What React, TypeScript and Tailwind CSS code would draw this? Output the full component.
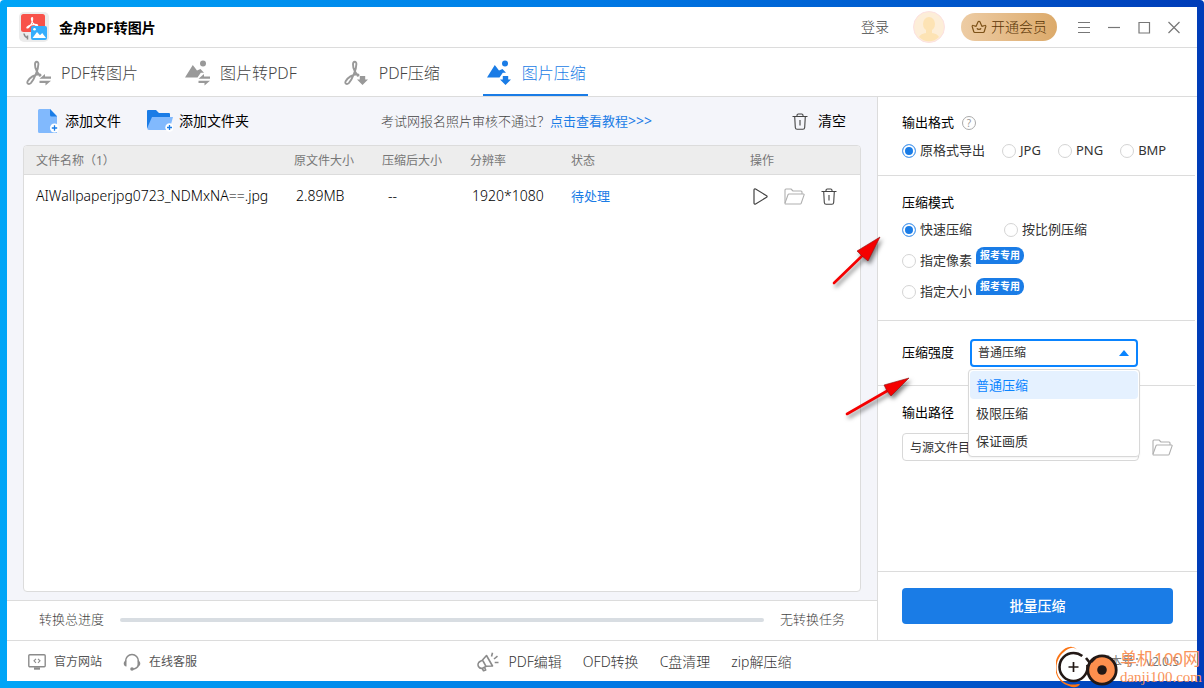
import { ReactNode, useState } from "react";

const tabs = [
  { label: "PDF转图片", icon: "pdf-swap" },
  { label: "图片转PDF", icon: "image-swap" },
  { label: "PDF压缩", icon: "pdf-down" },
  { label: "图片压缩", icon: "image-down" },
];

const formats = ["原格式导出", "JPG", "PNG", "BMP"];
const strengths = ["普通压缩", "极限压缩", "保证画质"];
const tools = ["PDF编辑", "OFD转换", "C盘清理", "zip解压缩"];

const windowButtons = [
  { label: "菜单", path: "M1 2.500h12M1 7.500h12M1 12.500h12" },
  { label: "最小化", path: "M1 7.500h12" },
  { label: "最大化", path: "M2 2.500h10.500v10.500H2z" },
  { label: "关闭", path: "M1.500 2 12.500 13M12.500 2 1.500 13" },
];

function TabIcon({ kind }: { kind: string }) {
  const isPdf = kind.startsWith("pdf");
  const isSwap = kind.endsWith("swap");
  return (
    <svg viewBox="0 0 25 26" className="h-[26px] w-[25px] shrink-0" aria-hidden="true">
      {isPdf ? (
        <path
          d="M14 15.200C11.500 13.500 8.900 8.500 9 4.200c.1-3.200 3.400-3.400 3.400-.2 0 5-4 15-7.400 18.800-2.200 2.300-4.800.8-3.200-1.800 2-3.400 6.700-6.600 11.200-6.800 2 0 2 1.500.6 1.500"
          fill="none"
          stroke="currentColor"
          strokeWidth="1.900"
          strokeLinecap="round"
        />
      ) : (
        <g fill="currentColor">
          <circle cx="18" cy="3.500" r="3" />
          <path d="M0 17.500 7.800 5l4.200 5.500 3.500-1.500 3.500 3.800h-3.200l-3.300 4.700z" />
        </g>
      )}
      {isSwap ? (
        <path d="M13.500 18.800 19 14v2.400h6v2.400zM25 20.800 19.500 25.500v-2.400h-6v-2.300z" fill="currentColor" />
      ) : (
        <path d="M15.800 16h5.400v3.600H24l-5.500 5.400-5.500-5.400h2.800z" fill="currentColor" />
      )}
    </svg>
  );
}

function AppLogo() {
  return (
    <svg viewBox="0 0 30 30" className="h-[30px] w-[30px] shrink-0" aria-hidden="true">
      <rect width="30" height="30" rx="5" fill="#ececec" />
      <path d="M4.500 2h19A2.500 2.500 0 0 1 26 4.500V16H2V4.500A2.500 2.500 0 0 1 4.500 2z" fill="#f8524a" />
      <path d="M2 16h12v4H4.500A2.500 2.500 0 0 1 2 17.500z" fill="#f8524a" />
      <path
        d="M13.200 5.500c-1.200 0-.9 2.600.1 4.500 1 2 3.800 4.200 5.200 3.600 1-.7-1.800-1.700-4.800-1-3 .6-6.200 2-5.900 3.100.6 1.200 3.500-1.700 4.700-4.200 1.100-2.400 1.600-6 .7-6z"
        fill="none"
        stroke="#fff"
        strokeWidth="1.100"
      />
      <rect x="12" y="14" width="16" height="14" rx="2" fill="#35aefc" />
      <path d="m13.500 26 4.500-6 3 3.300 2.200-2.300 3.800 5z" fill="#fff" />
      <circle cx="15.500" cy="17.300" r="1.300" fill="#fff" />
      <path d="M5 21.500c.3 2 1.500 3.700 3.500 4.300M8.500 23.500v4" fill="none" stroke="#8a8a8a" strokeWidth="1.500" />
    </svg>
  );
}

function AvatarIcon() {
  return (
    <svg viewBox="0 0 32 32" className="h-8 w-8 shrink-0" aria-hidden="true">
      <circle cx="16" cy="16" r="15.500" fill="#fdeed8" stroke="#fce0e0" />
      <ellipse cx="16" cy="13" rx="6" ry="7" fill="#fde3b4" />
      <path d="M13 18h6v4c3 .6 6 1.500 7 4a14 14 0 0 1-20 0c1-2.500 4-3.400 7-4z" fill="#fde3b4" />
    </svg>
  );
}

function CrownIcon() {
  return (
    <svg viewBox="0 0 16 14" className="h-[14px] w-4" fill="none" stroke="#7d5218" strokeWidth="1.200" strokeLinejoin="round" aria-hidden="true">
      <path d="M3.800 12.500c-.5 0-.9-.3-1-.8L1.200 6.500c-.2-.8.4-1.300 1-1l2.900.8 2-4.500c.3-.7 1.500-.7 1.800 0l2 4.500 2.900-.8c.6-.3 1.200.2 1 1l-1.600 5.200c-.1.500-.5.800-1 .8z" />
      <path d="M6 8.200c.5 1.600 3.500 1.600 4 0" />
    </svg>
  );
}

function AddFileIcon() {
  return (
    <svg viewBox="0 0 21 25" className="h-[25px] w-[21px]" aria-hidden="true">
      <path d="M1.500 0H12l7 7v17H1.500A1.500 1.500 0 0 1 0 22.500v-21A1.500 1.500 0 0 1 1.500 0z" fill="#81b9fd" />
      <path d="m12 0 7 7.500h-5.500A1.500 1.500 0 0 1 12 6z" fill="#1a7ce6" />
      <circle cx="16.500" cy="19" r="4.500" fill="#fff" />
      <path d="M16.500 16.300v5.400M13.800 19h5.400" stroke="#1a7ce6" strokeWidth="1.300" />
    </svg>
  );
}

function AddFolderIcon() {
  return (
    <svg viewBox="0 0 26 22" className="h-[22px] w-[26px]" aria-hidden="true">
      <path d="M0 1a1 1 0 0 1 1-1h8l3 3h10a1 1 0 0 1 1 1v14H0z" fill="#1a7ce6" />
      <path d="M5 7h21l-3.500 13H2a2 2 0 0 1-1.800-2z" fill="#81b9fd" />
      <circle cx="22.500" cy="17.500" r="4.200" fill="#fff" />
      <path d="M22.500 15v5M20 17.500h5" stroke="#1a7ce6" strokeWidth="1.300" />
    </svg>
  );
}

function TrashIcon() {
  return (
    <svg viewBox="0 0 16 17" className="h-[17px] w-4" fill="none" stroke="#444" strokeWidth="1.100" aria-hidden="true">
      <path d="M.5 3.500h15M5 3.500V2.300C5 1.500 5.600 1 6.300 1h3.400c.7 0 1.300.5 1.300 1.300v1.200M2.700 3.500l.6 11c.1 1 .7 1.800 1.800 1.800h5.800c1.100 0 1.700-.8 1.800-1.800l.6-11M8 7v5.500" />
    </svg>
  );
}

function FolderIcon() {
  return (
    <svg viewBox="0 0 21 17" className="h-[17px] w-[21px]" fill="none" stroke="#b0b0b0" strokeWidth="1.100" strokeLinejoin="round" aria-hidden="true">
      <path d="M1 15V2c0-.6.400-1 1-1h5l2 2h8c.6 0 1 .4 1 1v2" />
      <path d="M5 6h14.500c.5 0 .8.400.6.900l-2.900 8.400c-.2.500-.5.700-1 .7H1.600c-.5 0-.7-.4-.6-.9L4 6.700c.2-.5.500-.7 1-.7z" />
    </svg>
  );
}

function PlayIcon() {
  return (
    <svg viewBox="0 0 15 17" className="h-[17px] w-[15px]" fill="none" stroke="#444" strokeWidth="1.200" strokeLinejoin="round" aria-hidden="true">
      <path d="M1 2v13c0 1 .8 1.400 1.600.9l11-6.600c.7-.4.7-1.200 0-1.600l-11-6.600C1.800.6 1 1 1 2z" />
    </svg>
  );
}

function MonitorIcon() {
  return (
    <svg viewBox="0 0 18 16" className="h-4 w-[18px]" fill="none" stroke="#8b8b8b" strokeWidth="1.400" aria-hidden="true">
      <rect x=".8" y=".8" width="16.400" height="12" rx="1" />
      <path d="M8 4.800 6 6.800l2 2M10 4.800l2 2-2 2" strokeWidth="1.100" />
      <path d="M6 14.500h6" strokeWidth="2.400" />
    </svg>
  );
}

function HeadsetIcon() {
  return (
    <svg viewBox="0 0 18 18" className="h-[18px] w-[18px]" fill="none" stroke="#8b8b8b" strokeWidth="1.500" aria-hidden="true">
      <path d="M2.500 8.500a6.500 7 0 0 1 13 0M15.500 12c-.8 2.500-3 4-6 4.200" />
      <path d="M3.500 7.500v6C1.500 13.300.7 12 .7 10.500s1-2.800 2.800-3zM14.500 7.500v6c2-.2 2.800-1.500 2.800-3s-1-2.800-2.800-3z" fill="#8b8b8b" stroke="none" />
      <circle cx="9" cy="16" r="1.800" fill="#8b8b8b" stroke="none" />
    </svg>
  );
}

function MegaphoneIcon() {
  return (
    <svg viewBox="0 0 22 20" className="h-5 w-[22px]" fill="none" stroke="#8b8b8b" strokeWidth="1.600" strokeLinejoin="round" aria-hidden="true">
      <path d="M1.500 14.500c-1-1.800-.3-4 1.500-5l2.500-1.400L9.500 3.500l6 10.500-6.300.3-2.700 1.400c-1.800 1-4 .5-5-1.200zM5.500 8l3.500 6.300M5.200 16.300l1.300 2.500 2.200-.8-1.200-2.700" />
      <path d="M14.500 4.500 15.500.8M17 7l3.500-2.800M17.700 10.500h3.800" />
    </svg>
  );
}

interface RadioProps {
  name: string;
  label: string;
  checked: boolean;
  onSelect: () => void;
}

function Radio({ name, label, checked, onSelect }: RadioProps) {
  return (
    <label className="flex h-5 items-center gap-1 whitespace-nowrap">
      <input
        type="radio"
        name={name}
        checked={checked}
        onChange={onSelect}
        className="h-3.5 w-3.5 appearance-none rounded-full border border-[#d4d4d4] bg-white checked:border-[#5ba2f0] checked:bg-[#1a7ce6] checked:shadow-[inset_0_0_0_2px_white]"
      />
      {label}
    </label>
  );
}

function ExamBadge() {
  return (
    <span className="mb-3 ml-1 flex h-[17px] w-12 items-center justify-center rounded-t-lg rounded-br-lg bg-[#1a7ce6] text-[10px] font-bold text-white">
      报考专用
    </span>
  );
}

function IconButton({ label, children }: { label: string; children: ReactNode }) {
  return (
    <button type="button" aria-label={label} title={label}>
      {children}
    </button>
  );
}

function Watermark() {
  return (
    <div className="pointer-events-none absolute right-0.5 bottom-0 flex items-center gap-0.5 text-[#f9935a]">
      <svg viewBox="0 0 62 42" className="h-[42px] w-[62px]" fill="none" aria-hidden="true">
        <path d="M21 3.500C16-.5 11 3 8 6-2 14-2 30 8 36c5 3 9 3 14 2l2 0c-2 4-7 4-11 2C-2 36-5 16 5 6c4-4 10-8 16-2.500z" fill="#fb7414" />
        <circle cx="17.500" cy="21" r="14" fill="#fff" stroke="#231815" strokeWidth="2.600" strokeDasharray="78 10" strokeDashoffset="3" />
        <path d="M17.500 16v10M12.500 21h10" stroke="#231815" strokeWidth="1.700" />
        <circle cx="46" cy="24" r="14.200" fill="#fd8f4e" stroke="#231815" strokeWidth="2.800" />
        <circle cx="46" cy="24" r="4.800" fill="#231815" />
        <path d="m30 12 4 5M39 12l-4 4" stroke="#231815" strokeWidth="2.600" />
      </svg>
      <div className="flex flex-col">
        <span className="text-[17px] leading-5">单机100网</span>
        <span className="font-['Liberation_Serif',serif] text-[15px] leading-4">danji100.com</span>
      </div>
    </div>
  );
}

function Arrow({ points, line, className }: { points: string; line: string; className: string }) {
  return (
    <svg viewBox="0 0 72 56" className={className} aria-hidden="true">
      <g stroke="#8c1010" strokeWidth=".6">
        <path d={line} stroke="#f50000" strokeWidth="2.600" strokeLinecap="round" />
        <polygon points={points} fill="#f50000" />
      </g>
    </svg>
  );
}

export default function App() {
  const [activeTab, setActiveTab] = useState("图片压缩");
  const [format, setFormat] = useState("原格式导出");
  const [mode, setMode] = useState("快速压缩");
  const [strength, setStrength] = useState("普通压缩");
  const [path, setPath] = useState("与源文件目录相同");

  return (
    <div className="relative flex min-h-screen flex-col rounded-t bg-linear-to-r from-[#00a5f7] via-[#0078e4] via-50% to-[#003cb8] p-[7px] font-['Noto_Sans','Noto_Sans_CJK_SC',sans-serif] text-[13px] text-[#333]">
      <div className="flex flex-1 flex-col bg-white">
        <header className="flex h-[41px] items-center border-b border-[#dcdcdc] px-3">
          <AppLogo />
          <h1 className="ml-2.5 pt-0.5 text-sm font-bold text-black">金舟PDF转图片</h1>
          <button type="button" className="ml-auto text-sm font-light text-[#444]">
            登录
          </button>
          <div className="ml-6">
            <AvatarIcon />
          </div>
          <button
            type="button"
            className="ml-4 flex h-7 w-24 items-center justify-center gap-1 rounded-full bg-linear-to-r from-[#edcca4] to-[#dcaa6a] text-sm font-light text-[#5a3505]"
          >
            <CrownIcon />
            开通会员
          </button>
          <div className="mr-1 ml-5 flex items-center gap-4">
            {windowButtons.map((item) => (
              <IconButton key={item.label} label={item.label}>
                <svg viewBox="0 0 14 15" className="h-[15px] w-3.5" fill="none" stroke="#777" strokeWidth="1.200" aria-hidden="true">
                  <path d={item.path} />
                </svg>
              </IconButton>
            ))}
          </div>
        </header>

        <nav className="flex h-[49px] gap-[41px] border-b border-[#dcdcdc] pl-[15px]">
          {tabs.map((tab) => (
            <button
              key={tab.label}
              type="button"
              onClick={() => setActiveTab(tab.label)}
              className={`flex items-center gap-2.5 border-b-2 pt-1 pr-0.5 pl-1 text-base font-light ${
                activeTab === tab.label ? "border-[#1a7ce6] text-[#1a7ce6]" : "border-transparent text-[#999]"
              }`}
            >
              <TabIcon kind={tab.icon} />
              <span className={activeTab === tab.label ? "text-[#1a7ce6]" : "text-[#444]"}>{tab.label}</span>
            </button>
          ))}
        </nav>

        <div className="flex flex-1">
          <main className="flex flex-1 flex-col bg-[#f4f5fa]">
            <div className="flex h-12 items-center pr-[31px] pl-[31px] text-sm text-black">
              <button type="button" className="flex items-center gap-1.5">
                <AddFileIcon />
                添加文件
              </button>
              <button type="button" className="ml-[26px] flex items-center gap-1.5">
                <AddFolderIcon />
                添加文件夹
              </button>
              <p className="flex-1 pr-2 text-center text-[13px] font-light text-[#444]">
                考试网报名照片审核不通过？
                <a href="#" className="font-normal text-[#1a7ce6]">
                  点击查看教程<span className="text-sm">&gt;&gt;&gt;</span>
                </a>
              </p>
              <button type="button" className="flex items-center gap-2.5">
                <TrashIcon />
                清空
              </button>
            </div>

            <div className="mx-4 mb-2 flex-1 overflow-hidden rounded border border-[#dcdcdc] bg-white">
              <table className="w-full table-fixed text-left">
                <thead>
                  <tr className="h-7 border-b border-[#dcdcdc] bg-[#ededed] text-xs text-[#777]">
                    <th className="pt-0.5 pl-3 font-normal">文件名称（1）</th>
                    <th className="w-[88px] pt-0.5 font-normal">原文件大小</th>
                    <th className="w-[88px] pt-0.5 font-normal">压缩后大小</th>
                    <th className="w-[101px] pt-0.5 font-normal">分辨率</th>
                    <th className="w-[179px] pt-0.5 font-normal">状态</th>
                    <th className="w-[110px] pt-0.5 font-normal">操作</th>
                  </tr>
                </thead>
                <tbody>
                  <tr className="h-11">
                    <td className="truncate pl-3 text-sm font-light text-black">AIWallpaperjpg0723_NDMxNA==.jpg</td>
                    <td className="pl-0.5 text-sm font-light text-black">2.89MB</td>
                    <td className="pl-1.5 text-sm font-light text-black">--</td>
                    <td className="pl-0.5 text-sm font-light text-black">1920*1080</td>
                    <td className="text-[#1a7ce6]">待处理</td>
                    <td className="pl-[3px]">
                      <div className="flex items-center gap-4">
                        <IconButton label="开始">
                          <PlayIcon />
                        </IconButton>
                        <IconButton label="打开文件夹">
                          <FolderIcon />
                        </IconButton>
                        <IconButton label="删除">
                          <TrashIcon />
                        </IconButton>
                      </div>
                    </td>
                  </tr>
                </tbody>
              </table>
            </div>

            <div className="flex h-10 items-center gap-4 border-t border-[#dcdcdc] bg-white px-8 pb-0.5 font-light text-[#444]">
              <span>转换总进度</span>
              <div role="progressbar" aria-label="转换总进度" aria-valuenow={0} className="h-1 flex-1 rounded-full bg-[#d8dde2]" />
              <span>无转换任务</span>
            </div>
          </main>

          <aside className="relative flex w-80 flex-col border-l border-[#dcdcdc] bg-white">
            <section className="mr-0.5 border-b border-[#dcdcdc] px-6 pt-4 pb-3.5">
              <h2 className="flex h-5 items-center gap-2 text-black">
                输出格式
                <span className="flex h-3.5 w-3.5 items-center justify-center rounded-full border border-[#aaa] text-[10px] text-[#999]">?</span>
              </h2>
              <div className="mt-2 flex gap-[17px]">
                {formats.map((item) => (
                  <Radio key={item} name="format" label={item} checked={format === item} onSelect={() => setFormat(item)} />
                ))}
              </div>
            </section>

            <section className="mr-0.5 border-b border-[#dcdcdc] px-6 pt-4 pb-[18px]">
              <h2 className="h-5 leading-5 text-black">压缩模式</h2>
              <div className="mt-2 flex flex-col gap-[11px]">
                <div className="flex gap-8">
                  <Radio name="mode" label="快速压缩" checked={mode === "快速压缩"} onSelect={() => setMode("快速压缩")} />
                  <Radio name="mode" label="按比例压缩" checked={mode === "按比例压缩"} onSelect={() => setMode("按比例压缩")} />
                </div>
                {["指定像素", "指定大小"].map((item) => (
                  <div key={item} className="flex h-5 items-center">
                    <Radio name="mode" label={item} checked={mode === item} onSelect={() => setMode(item)} />
                    <ExamBadge />
                  </div>
                ))}
              </div>
            </section>

            <section className="mr-0.5 flex items-center gap-4 border-b border-[#dcdcdc] px-6 py-[18px]">
              <label htmlFor="strength" className="text-black">
                压缩强度
              </label>
              <div className="relative w-[168px]">
                <select
                  id="strength"
                  value={strength}
                  onChange={(e) => setStrength(e.target.value)}
                  className="block h-7 w-full appearance-none rounded border-2 border-[#0a84ff] bg-white px-1.5 text-xs"
                >
                  {strengths.map((item) => (
                    <option key={item}>{item}</option>
                  ))}
                </select>
                <svg viewBox="0 0 10 6" className="pointer-events-none absolute top-[11px] right-[9px] h-1.5 w-2.5" aria-hidden="true">
                  <path d="M0 6 5 0l5 6z" fill="#0a84ff" />
                </svg>
                <ul
                  role="listbox"
                  aria-label="压缩强度"
                  className="absolute top-[30px] -right-0.5 -left-0.5 z-10 rounded border border-[#d8d8d8] bg-white p-px shadow-xs"
                >
                  {strengths.map((item) => (
                    <li
                      key={item}
                      role="option"
                      aria-selected={strength === item}
                      onClick={() => setStrength(item)}
                      className={`h-7 rounded-sm px-1.5 leading-7 ${strength === item ? "bg-[#e5f1ff] text-[#0a84ff]" : ""}`}
                    >
                      {item}
                    </li>
                  ))}
                </ul>
              </div>
            </section>

            <section className="flex-1 px-6 pt-4">
              <label htmlFor="path" className="block h-5 leading-5 text-black">
                输出路径
              </label>
              <div className="mt-[11px] flex items-center gap-[13px]">
                <input
                  id="path"
                  value={path}
                  onChange={(e) => setPath(e.target.value)}
                  className="h-7 w-[238px] rounded border border-[#d8d8d8] bg-white px-[7px] text-xs"
                />
                <IconButton label="选择目录">
                  <FolderIcon />
                </IconButton>
              </div>
            </section>

            <div className="border-t border-[#dcdcdc] px-6 py-4">
              <button type="button" className="h-9 w-full rounded bg-[#1a7ce6] text-sm font-medium text-white">
                批量压缩
              </button>
            </div>

            {/* annotation arrows */}
            <Arrow
              className="pointer-events-none absolute top-[134px] -left-12 h-14 w-[72px] drop-shadow-[2px_3px_2px_rgba(0,0,0,0.5)]"
              line="M4 52 33 24"
              points="50,6 27,20 32,25 38,30"
            />
            <Arrow
              className="pointer-events-none absolute top-[268px] -left-[35px] h-14 w-[72px] drop-shadow-[2px_3px_2px_rgba(0,0,0,0.5)]"
              line="M4 49 44 26"
              points="66,13 41,20 44,26 48,31"
            />
          </aside>
        </div>

        <footer className="flex h-[41px] items-center justify-between border-t border-[#dcdcdc] pt-0.5 pr-[18px] pl-[21px] text-xs text-[#555]">
          <div className="flex items-center gap-[21px]">
            <a href="#" className="flex items-center gap-2">
              <MonitorIcon />
              官方网站
            </a>
            <a href="#" className="flex items-center gap-2">
              <HeadsetIcon />
              在线客服
            </a>
          </div>
          <div className="flex items-center gap-[21px] text-sm font-light text-[#333]">
            <div className="flex items-center gap-2.5">
              <MegaphoneIcon />
              <a href="#">{tools[0]}</a>
            </div>
            {tools.slice(1).map((tool) => (
              <a key={tool} href="#">
                {tool}
              </a>
            ))}
          </div>
          <span className="w-[108px] text-right whitespace-nowrap text-[#777]">版本号：v2.0.5</span>
        </footer>
      </div>
      <Watermark />
    </div>
  );
}
